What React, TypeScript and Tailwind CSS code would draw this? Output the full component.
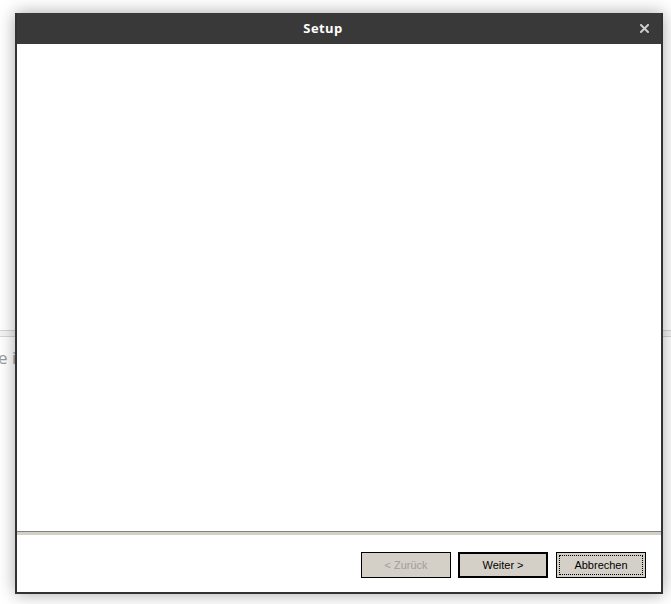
import React from "react";

const btn =
  "flex h-[26px] w-[90px] items-center justify-center bg-[#d4d0c8] text-[11px]";

export default function App() {
  return (
    <div className="relative h-[604px] w-[671px] overflow-hidden bg-white font-['Liberation_Sans',Arial,sans-serif]">
      {/* page behind the dialog */}
      <div className="h-[330px]" />
      <div className="h-[7px] border-y border-[#d6d6d6] bg-[#f4f4f4]" />
      <div className="-ml-[2px] pt-[8px] text-[17px] text-[#9a9a9a] font-['Open_Sans',sans-serif]">
        e i
      </div>

      {/* dialog */}
      <div className="absolute left-[15px] top-[13px] flex h-[581px] w-[648px] flex-col bg-[#333333] px-[2px] pb-[2px] shadow-[0_0_16px_rgba(0,0,0,0.35)]">
        <div className="relative flex h-[31px] shrink-0 items-center justify-center bg-[#393939] pr-[32px]">
          <span className="text-[13px] font-bold tracking-[0.4px] text-white font-['Open_Sans',sans-serif]">
            Setup
          </span>
          <button className="absolute right-[12px] top-[11px] h-[9px] w-[9px]">
            <svg viewBox="0 0 9 9" className="h-[9px] w-[9px]">
              <path d="M1 1L8 8M8 1L1 8" stroke="#cccccc" strokeWidth="2" strokeLinecap="square" />
            </svg>
          </button>
        </div>
        <div className="flex flex-1 flex-col bg-white">
          <div className="flex-1" />
          <div className="h-px bg-[#808080]" />
          <div className="h-[3px] bg-[#d4d0c8]" />
          <div className="flex h-[57px] items-start justify-end pr-[15px] pt-[17px]">
            <button className={`${btn} border border-black text-[#a19e97]`}>&lt; Zurück</button>
            <button className={`${btn} ml-[7px] border-2 border-black text-black`}>Weiter &gt;</button>
            <button className={`${btn} ml-[8px] border border-black p-[2px] text-black`}>
              <span className="flex h-full w-full items-center justify-center border border-dotted border-black">
                Abbrechen
              </span>
            </button>
          </div>
        </div>
      </div>
    </div>
  );
}
